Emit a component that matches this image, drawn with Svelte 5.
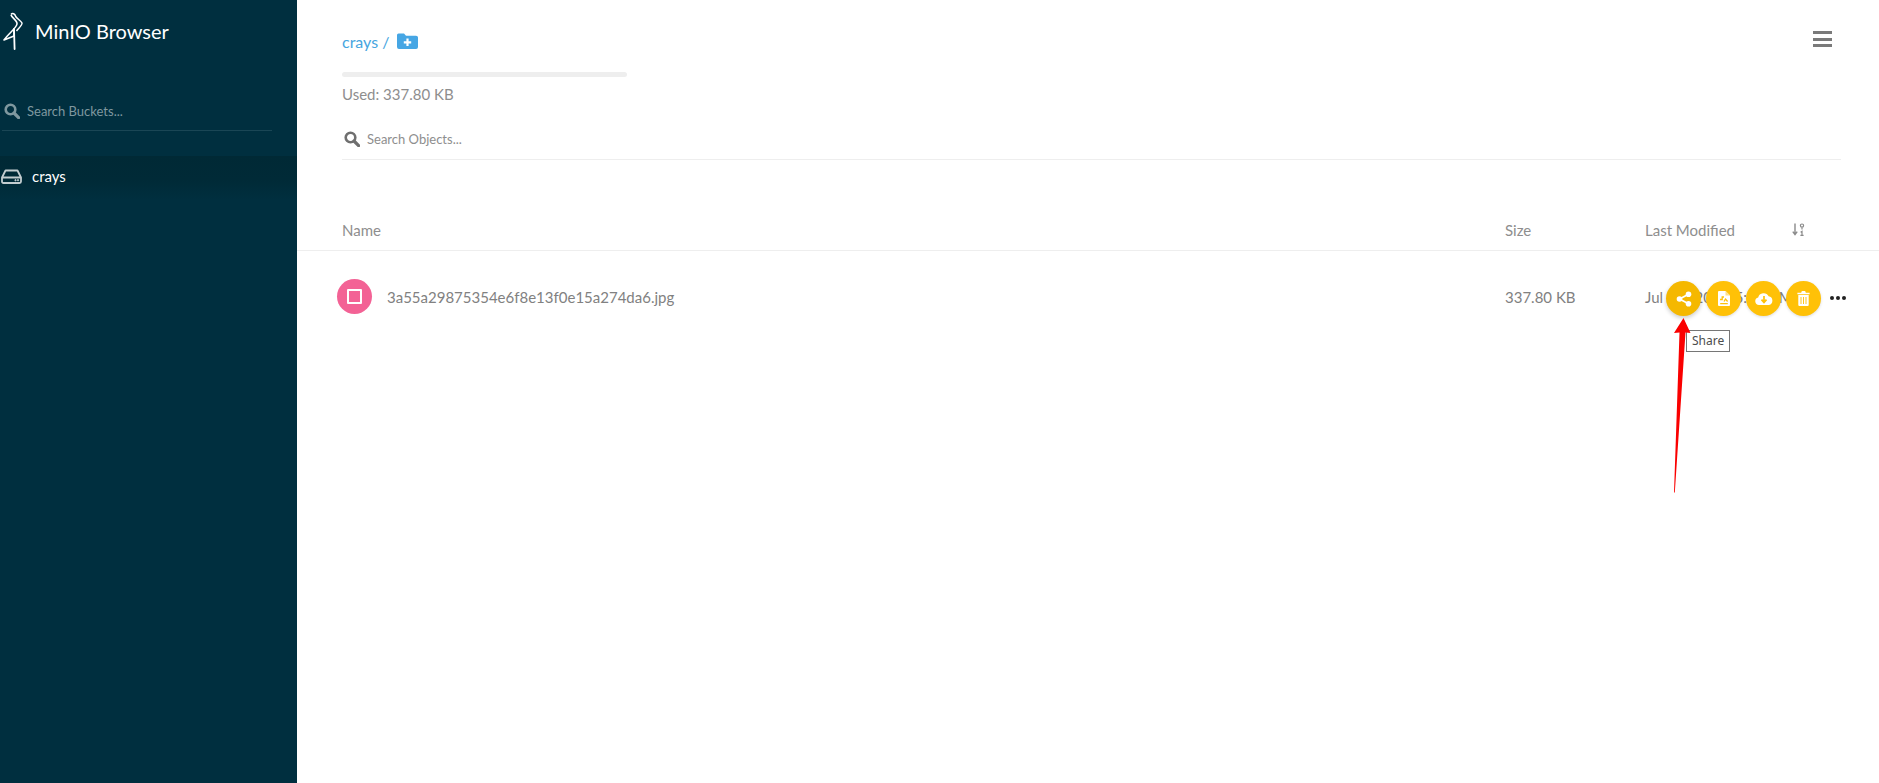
<script>
	const columns = [
		{ label: 'Name', cls: 'c-name' },
		{ label: 'Size', cls: 'c-size' },
		{ label: 'Last Modified', cls: 'c-date' }
	];
	const file = { name: '3a55a29875354e6f8e13f0e15a274da6.jpg', size: '337.80 KB', date: 'Jul 15, 2021 5:18 PM' };
</script>

<div class="layout">
	<aside class="side">
		<div class="brand">
			<svg class="logo" viewBox="0 0 24 40" width="24" height="40" fill="none" stroke="#fff">
				<path d="M10 3.5 C11.5 1.5 14 3 14.5 5 C15 7 20 10 21 12 C21.5 14 18 17 15.5 20" stroke-width="1.5" />
				<path d="M10 4 C11 7 16.5 9.5 16 13 C15.5 17 7 23 3 29 L13 25 L13 18" stroke-width="1.6" stroke-linejoin="round" />
				<path d="M13 18 L13.6 38" stroke-width="1.8" stroke-linecap="round" />
			</svg>
			<span class="brand-name">MinIO Browser</span>
		</div>

		<div class="bucket-search">
			<svg class="mag" viewBox="0 0 16 16" width="16" height="16" fill="none" stroke="#7f989f" stroke-width="2.6">
				<circle cx="6.5" cy="6.5" r="4.8" />
				<path d="M10 10l4.6 4.6" stroke-width="3.2" stroke-linecap="round" />
			</svg>
			<span>Search Buckets...</span>
		</div>

		<div class="bucket">
			<svg viewBox="0 0 21 15" width="21" height="15" fill="none" stroke="#c3cdd0" stroke-width="1.8">
				<path d="M1 8.5 L4.5 1.5 H16.5 L20 8.5 V12.5 Q20 14 18.5 14 H2.5 Q1 14 1 12.5 Z M1 8.5 H20" stroke-linejoin="round" />
				<circle cx="14.5" cy="11.2" r="0.7" fill="#c3cdd0" stroke-width="0.8" />
				<circle cx="17" cy="11.2" r="0.7" fill="#c3cdd0" stroke-width="0.8" />
			</svg>
			<span>crays</span>
		</div>
	</aside>

	<main class="main">
		<header class="top">
			<div class="top-head">
				<div class="crumbs">
					<span class="path">crays /</span>
					<svg viewBox="0 0 21 16" width="21" height="16">
						<path d="M0 2 Q0 0.5 1.5 0.5 H7 L9 2.8 H19 Q21 2.8 21 4.5 V14 Q21 16 19 16 H2 Q0 16 0 14 Z" fill="#46a6e4" />
						<path d="M10.5 5.5 V13 M6.8 9.3 H14.2" stroke="#fff" stroke-width="2.2" />
					</svg>
				</div>
				<div class="burger"><i></i><i></i><i></i></div>
			</div>
			<div class="usage"></div>
			<p class="used">Used: 337.80 KB</p>
			<div class="object-search">
				<svg viewBox="0 0 16 16" width="16" height="16" fill="none" stroke="#6f6f6f" stroke-width="2.6">
					<circle cx="6.5" cy="6.5" r="4.8" />
					<path d="M10 10l4.6 4.6" stroke-width="3.2" stroke-linecap="round" />
				</svg>
				<span>Search Objects...</span>
			</div>
		</header>

		<div class="thead">
			{#each columns as c}
				<span class={c.cls}>{c.label}</span>
			{/each}
			<svg class="sort" viewBox="0 0 13 13" width="13" height="13" fill="none" stroke="#8a8a8a">
				<path d="M3 0.5 V11 M0.8 8.6 L3 11.6 L5.2 8.6" stroke-width="1.4" />
				<circle cx="10" cy="2.6" r="1.6" stroke-width="1.2" />
				<path d="M10 4.5 V6.5 M8.6 9.2 L10 8.4 V12.4 M8.4 12.4 H11.6" stroke-width="1.2" />
			</svg>
		</div>

		<div class="row">
			<div class="c-name file">
				<span class="thumb"><i></i></span>
				<span>{file.name}</span>
			</div>
			<span class="c-size">{file.size}</span>
			<span class="c-date date">{file.date}</span>

			<div class="actions">
				<button class="act share" aria-label="Share">
					<svg viewBox="0 0 16 16" width="16" height="16" fill="#fff" stroke="#fff">
						<path d="M3.5 8 L12.5 3.2 M3.5 8 L12.5 12.8" stroke-width="1.7" />
						<circle cx="3.5" cy="8" r="2.8" stroke="none" />
						<circle cx="12.5" cy="3.2" r="2.8" stroke="none" />
						<circle cx="12.5" cy="12.8" r="2.8" stroke="none" />
					</svg>
				</button>
				<button class="act" aria-label="Preview">
					<svg viewBox="0 0 12 15" width="12" height="15">
						<path d="M0 1 Q0 0 1 0 H7.5 L12 4.5 V14 Q12 15 11 15 H1 Q0 15 0 14 Z" fill="#fff" />
						<path d="M2 8.5 H4.2 V6 H6 M2.2 12.6 H9.8 M6 10.5 L7.5 8 L9.6 10.5" fill="none" stroke="#ffc107" stroke-width="1.3" />
						<path d="M7.5 0 V4.5 H12" fill="#ffe08a" />
					</svg>
				</button>
				<button class="act" aria-label="Download">
					<svg viewBox="0 0 18 13" width="18" height="13">
						<path d="M4 13 A3.8 3.8 0 0 1 3.2 5.5 A5.6 5.6 0 0 1 13.6 4.2 A4.5 4.5 0 0 1 14 13 Z" fill="#fff" />
						<path d="M9 4 V10 M6.5 7.6 L9 10.4 L11.5 7.6" fill="none" stroke="#ffc107" stroke-width="1.7" />
					</svg>
				</button>
				<button class="act" aria-label="Delete">
					<svg viewBox="0 0 13 15" width="13" height="15" fill="#fff">
						<path d="M4.4 1 Q4.6 0 5.4 0 H7.6 Q8.4 0 8.6 1 L8.8 1.7 H12.6 V3.2 H0.4 V1.7 H4.2 Z" />
						<path d="M1.3 4 H11.7 V14 Q11.7 15 10.7 15 H2.3 Q1.3 15 1.3 14 Z" />
						<path d="M4 6 V13 M6.5 6 V13 M9 6 V13" stroke="#ffc107" stroke-width="0.9" />
					</svg>
				</button>
				<div class="tip">Share</div>
			</div>

			<div class="more"><i></i><i></i><i></i></div>
		</div>
	</main>

	<!-- red annotation painted over the screenshot -->
	<svg class="arrow" viewBox="0 0 20 176" width="20" height="176">
		<path d="M10.5 0 L17.5 15 L12.5 14.5 L1.8 174.5 L1 174.5 L6.5 14.5 L1 15 Z" fill="#fa0000" />
	</svg>
</div>

<style>
	:global(body) {
		margin: 0;
		background: #fff;
		font-family: Lato, "Open Sans", sans-serif;
	}
	.layout {
		display: flex;
		height: 783px;
		overflow: hidden;
		position: relative;
	}

	.side {
		width: 297px;
		flex: none;
		background: #002f3f;
		color: #fff;
	}
	.brand {
		display: flex;
		align-items: center;
		gap: 10px;
		height: 40px;
		padding: 11px 0 0 1px;
	}
	.logo {
		flex: none;
	}
	.brand-name {
		font-size: 20px;
		margin-top: -1px;
	}
	.bucket-search {
		display: flex;
		align-items: center;
		gap: 7px;
		height: 20px;
		margin: 50px 25px 0 2px;
		padding: 0 0 9px 2px;
		border-bottom: 1px solid #1a4655;
		font-size: 13px;
		color: #7f989f;
	}
	.bucket {
		display: flex;
		align-items: center;
		gap: 10px;
		height: 44px;
		margin-top: 25px;
		padding: 0 0 4px 1px;
		box-sizing: border-box;
		background: linear-gradient(#002935, #002a37 55%, #002f3f);
		font-size: 15px;
	}

	.main {
		flex: 1;
		min-width: 0;
		color: #8e8e8e;
	}
	.top {
		padding: 31px 38px 0 45px;
	}
	.top-head {
		display: flex;
		justify-content: space-between;
		align-items: flex-start;
		height: 41px;
	}
	.crumbs {
		display: flex;
		align-items: center;
		gap: 8px;
		height: 20px;
	}
	.path {
		font-size: 16px;
		color: #46a5e0;
	}
	.burger {
		display: flex;
		flex-direction: column;
		gap: 3.5px;
		width: 19px;
		margin-right: 9px;
	}
	.burger i {
		display: block;
		height: 3px;
		background: #7a7a7a;
	}
	.usage {
		width: 285px;
		height: 5px;
		border-radius: 3px;
		background: #eee;
	}
	.used {
		margin: 8px 0 0;
		font-size: 15px;
		line-height: 18px;
	}
	.object-search {
		display: flex;
		align-items: center;
		gap: 7px;
		height: 32px;
		margin-top: 20px;
		padding-left: 2px;
		padding-bottom: 4px;
		border-bottom: 1px solid #eee;
		font-size: 13px;
		color: #8e8e8e;
	}

	.thead {
		display: flex;
		align-items: center;
		height: 41px;
		margin-top: 49px;
		padding: 0 0 0 45px;
		border-bottom: 1px solid #eee;
		font-size: 15px;
		color: #8e8e8e;
	}
	.c-name {
		width: 1163px;
		flex: none;
	}
	.c-size {
		width: 140px;
		flex: none;
	}
	.c-date {
		width: 147px;
		flex: none;
		white-space: nowrap;
	}
	.date {
		word-spacing: 1.5px;
	}
	.sort {
		flex: none;
	}

	.row {
		display: flex;
		align-items: center;
		height: 35px;
		margin-top: 28px;
		padding-left: 45px;
		font-size: 15px;
		color: #818181;
		position: relative;
	}
	.file {
		display: flex;
		align-items: center;
		gap: 15px;
		margin-left: -5px;
		width: 1168px;
	}
	.thumb {
		display: flex;
		align-items: center;
		justify-content: center;
		width: 35px;
		height: 35px;
		border-radius: 50%;
		background: #f36295;
	}
	.thumb i {
		display: block;
		width: 11px;
		height: 11px;
		border: 2px solid #fff;
		border-radius: 1px;
	}

	.actions {
		position: absolute;
		left: 1369px;
		top: 2px;
		display: flex;
		gap: 5px;
	}
	.act {
		display: flex;
		align-items: center;
		justify-content: center;
		width: 35px;
		height: 35px;
		padding: 0;
		border: 0;
		border-radius: 50%;
		background: #ffc107;
		box-shadow: 0 1px 3px rgba(0, 0, 0, 0.14);
	}
	.share {
		background: #f5b800;
		box-shadow: 0 2px 4px rgba(0, 0, 0, 0.2);
	}
	.tip {
		position: absolute;
		left: 20px;
		top: 49px;
		padding: 0 5px;
		height: 20px;
		line-height: 20px;
		border: 1px solid #767676;
		background: #fff;
		font-family: "Noto Sans", sans-serif;
		font-size: 12px;
		color: #4c4c4c;
	}
	.more {
		position: absolute;
		left: 1533px;
		top: 17px;
		display: flex;
		gap: 2px;
	}
	.more i {
		display: block;
		width: 4px;
		height: 4px;
		border-radius: 50%;
		background: #222;
	}

	.arrow {
		position: absolute;
		left: 1673px;
		top: 318px;
	}
</style>
